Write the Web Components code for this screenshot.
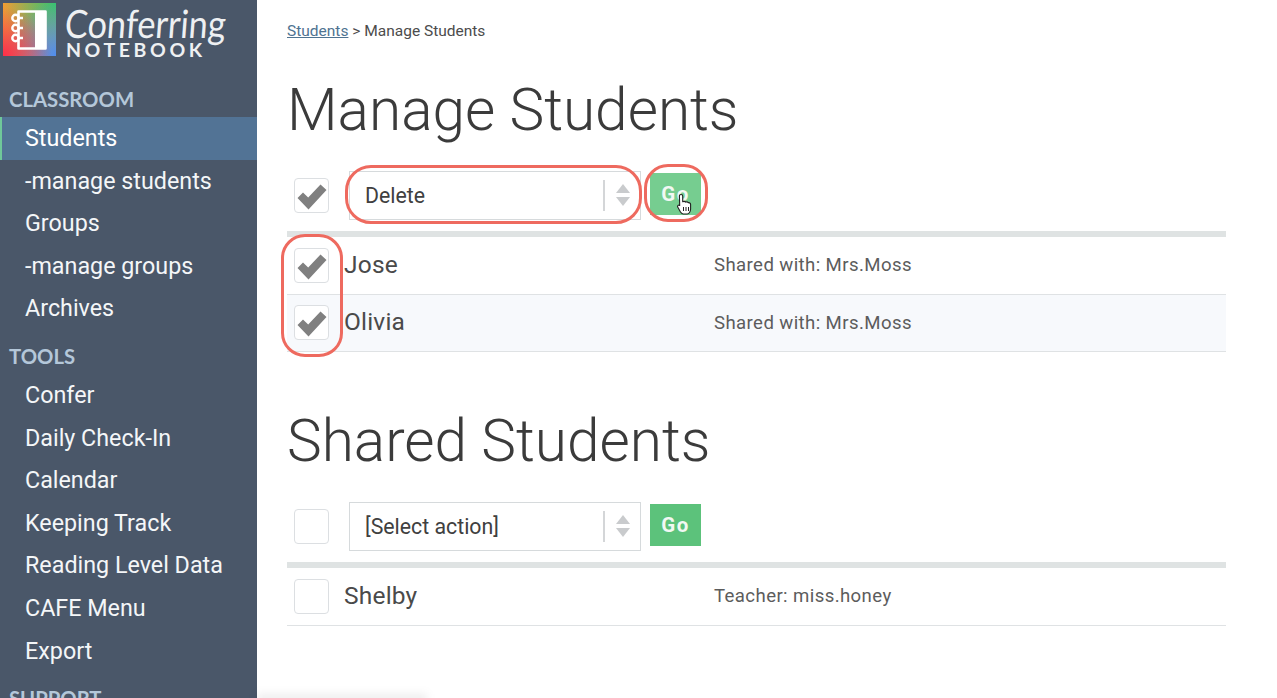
<!DOCTYPE html>
<html lang="en">
<head>
<meta charset="utf-8">
<title>Manage Students</title>
<style>
  html, body { margin: 0; height: 100%; overflow: hidden; background: #fff; }
  body { font-family: Roboto, "Liberation Sans", sans-serif; }
</style>
</head>
<body>
<app-shell>
  <side-nav slot="side">
    <nav-head>CLASSROOM</nav-head>
    <nav-item active>Students</nav-item>
    <nav-item>-manage students</nav-item>
    <nav-item>Groups</nav-item>
    <nav-item>-manage groups</nav-item>
    <nav-item>Archives</nav-item>
    <nav-head>TOOLS</nav-head>
    <nav-item>Confer</nav-item>
    <nav-item>Daily Check-In</nav-item>
    <nav-item>Calendar</nav-item>
    <nav-item>Keeping Track</nav-item>
    <nav-item>Reading Level Data</nav-item>
    <nav-item>CAFE Menu</nav-item>
    <nav-item>Export</nav-item>
    <nav-head>SUPPORT</nav-head>
  </side-nav>

  <bread-crumb><a>Students</a> &gt; Manage Students</bread-crumb>

  <page-title>Manage Students</page-title>
  <action-bar action="Delete" checked marked></action-bar>
  <student-list marked>
    <student-row name="Jose" note="Shared with: Mrs.Moss" checked></student-row>
    <student-row name="Olivia" note="Shared with: Mrs.Moss" checked alt></student-row>
  </student-list>

  <page-title second>Shared Students</page-title>
  <action-bar action="[Select action]"></action-bar>
  <student-list>
    <student-row name="Shelby" note="Teacher: miss.honey"></student-row>
  </student-list>
</app-shell>

<script>
class AppShell extends HTMLElement {
  constructor() {
    super();
    this.attachShadow({ mode: "open" });
    this.shadowRoot.innerHTML = `
      <style>
        :host {
          display: grid;
          grid-template-columns: 257px 1fr;
          height: 698px;
          overflow: hidden;
          position: relative;
        }
        main {
          padding: 0 51px 0 30px;
          min-width: 0;
        }
        .smudge {
          position: absolute;
          left: 257px;
          bottom: -8px;
          width: 170px;
          height: 12px;
          background: rgba(0, 0, 0, 0.07);
          filter: blur(5px);
        }
      </style>
      <slot name="side"></slot>
      <main><slot></slot></main>
      <div class="smudge"></div>
    `;
  }
}

class SideNav extends HTMLElement {
  constructor() {
    super();
    this.attachShadow({ mode: "open" });
    this.shadowRoot.innerHTML = `
      <style>
        :host {
          display: block;
          background: #4a5769;
          height: 698px;
          overflow: hidden;
          color: #fff;
        }
        .logo {
          display: flex;
          gap: 10px;
          height: 86px;
          padding: 3px 0 0 3px;
          box-sizing: border-box;
        }
        .mark {
          width: 53px;
          height: 53px;
          flex: none;
          background:
            radial-gradient(circle at 0% 100%, #ff2d4a 0, rgba(255, 45, 74, 0) 65%),
            radial-gradient(circle at 100% 100%, #4f8df0 0, rgba(79, 141, 240, 0) 72%),
            radial-gradient(circle at 100% 0%, #35c46f 0, rgba(53, 196, 111, 0) 75%),
            linear-gradient(135deg, #ff9a2e, #b9a060);
        }
        .mark svg { display: block; }
        .words {
          position: relative;
          flex: 1;
          color: #eef0f2;
        }
        .hand {
          position: absolute;
          left: 1px;
          top: -3px;
          font: 400 39px/47px Lato, sans-serif;
          transform: scaleX(0.88) skewX(-5deg);
          transform-origin: 0 0;
          white-space: nowrap;
        }
        .book {
          position: absolute;
          left: 0;
          top: 35px;
          font: 700 19.5px/24px Lato, sans-serif;
          letter-spacing: 3.6px;
          white-space: nowrap;
        }
      </style>
      <div class="logo">
        <div class="mark">
          <svg width="53" height="53" viewBox="0 0 53 53" fill="none" stroke="#fff" aria-hidden="true">
            <path d="M15.5 8.5h27v37h-27z" stroke-width="2.6" stroke-linejoin="round"/>
            <path d="M32 8h11v38H32z" fill="#fff" stroke="none"/>
            <g stroke-width="2.4">
              <circle cx="12.5" cy="15" r="3.2"/>
              <circle cx="12.5" cy="25" r="3.2"/>
              <circle cx="12.5" cy="35" r="3.2"/>
              <path d="M15 15h5M15 25h5M15 35h5"/>
            </g>
          </svg>
        </div>
        <div class="words">
          <div class="hand">Conferring</div>
          <div class="book">NOTEBOOK</div>
        </div>
      </div>
      <slot></slot>
    `;
  }
}

class NavHead extends HTMLElement {
  constructor() {
    super();
    this.attachShadow({ mode: "open" });
    this.shadowRoot.innerHTML = `
      <style>
        :host {
          display: block;
          height: 31px;
          padding-left: 9px;
          font: 700 20.3px/27px Lato, sans-serif;
          color: #b4c7d9;
        }
        :host(:not(:first-child)) { margin-top: 13px; }
      </style>
      <slot></slot>
    `;
  }
}

class NavItem extends HTMLElement {
  constructor() {
    super();
    this.attachShadow({ mode: "open" });
    this.shadowRoot.innerHTML = `
      <style>
        :host {
          display: block;
          height: 42.6px;
          line-height: 43px;
          padding-left: 25px;
          font-family: Roboto, sans-serif;
          font-size: 23.3px;
          color: #f4f6f8;
          box-sizing: border-box;
        }
        :host([active]) {
          background: #527395;
          border-left: 2px solid #6fc79a;
          padding-left: 23px;
          color: #fff;
        }
      </style>
      <slot></slot>
    `;
  }
}

class BreadCrumb extends HTMLElement {
  constructor() {
    super();
    this.attachShadow({ mode: "open" });
    this.shadowRoot.innerHTML = `
      <style>
        :host {
          display: block;
          padding-top: 21px;
          font: 15.5px/20px Roboto, sans-serif;
          color: #4c4c4c;
        }
        ::slotted(a) {
          color: #4f7391;
          text-decoration: underline;
        }
      </style>
      <slot></slot>
    `;
  }
}

class PageTitle extends HTMLElement {
  constructor() {
    super();
    this.attachShadow({ mode: "open" });
    this.shadowRoot.innerHTML = `
      <style>
        :host {
          display: block;
          margin-top: 30px;
          height: 88px;
          font: 300 58.5px/78px Roboto, sans-serif;
          color: #3b3b3b;
          white-space: nowrap;
        }
        :host([second]) { margin-top: 50px; }
      </style>
      <slot></slot>
    `;
  }
}

class CheckBox extends HTMLElement {
  constructor() {
    super();
    this.attachShadow({ mode: "open" });
    this.shadowRoot.innerHTML = `
      <style>
        :host {
          display: block;
          flex: none;
          width: 35px;
          height: 35px;
          box-sizing: border-box;
          border: 1px solid #dcdfe2;
          border-radius: 4px;
          background: #fff;
        }
        svg { display: none; width: 33px; height: 33px; }
        :host([checked]) svg { display: block; }
      </style>
      <svg viewBox="0 0 33 33" aria-hidden="true">
        <path d="M2.5 19l5.5-5.5 5.2 5L25.5 5.5l6 5.5L13.5 30.5z" fill="#808080"/>
      </svg>
    `;
  }
}

class ActionBar extends HTMLElement {
  constructor() {
    super();
    this.attachShadow({ mode: "open" });
    const marked = this.hasAttribute("marked");
    const checked = this.hasAttribute("checked") ? "checked" : "";
    this.shadowRoot.innerHTML = `
      <style>
        :host {
          display: flex;
          align-items: center;
          height: 72px;
          padding-left: 7px;
          border-bottom: 6.5px solid #dfe3e3;
        }
        .select {
          position: relative;
          display: flex;
          align-items: center;
          width: 292px;
          height: 49px;
          margin-left: 20px;
          box-sizing: border-box;
          border: 1px solid #d6dadc;
          padding-left: 15px;
          font: 21.3px Roboto, sans-serif;
          color: #404040;
          background: #fff;
        }
        .arrows {
          position: absolute;
          right: 0;
          top: 8px;
          width: 37px;
          height: 31px;
          box-sizing: border-box;
          border-left: 2px solid #d4d6d8;
          display: flex;
          flex-direction: column;
          align-items: center;
          justify-content: center;
          gap: 4px;
        }
        .up, .down {
          width: 0;
          height: 0;
          border-left: 7.5px solid transparent;
          border-right: 7.5px solid transparent;
        }
        .up { border-bottom: 9px solid #c9cbcd; }
        .down { border-top: 9px solid #c9cbcd; }
        .go {
          position: relative;
          width: 51px;
          height: 42px;
          margin: -2px 0 0 9px;
          display: flex;
          align-items: center;
          justify-content: center;
          background: #5cc27b;
          color: #f2f8f3;
          font: 700 20.5px Roboto, sans-serif;
          letter-spacing: 1.5px;
        }
        :host([marked]) .go { background: #76cd90; }
        .ring {
          position: absolute;
          border: 3px solid #ee6a5f;
          border-radius: 26px;
          pointer-events: none;
        }
        .ring-select { left: -5px; right: -2px; top: -7px; bottom: -5px; }
        .ring-go { left: -6px; right: -7px; top: -9px; bottom: -7px; border-radius: 24px; }
        .hand {
          position: absolute;
          left: 26px;
          top: 20px;
        }
      </style>
      <check-box ${checked}></check-box>
      <div class="select">
        ${this.getAttribute("action")}
        <div class="arrows"><div class="up"></div><div class="down"></div></div>
        ${marked ? '<div class="ring ring-select"></div>' : ""}
      </div>
      <div class="go">
        Go
        ${marked ? `
          <div class="ring ring-go"></div>
          <svg class="hand" width="17" height="22" viewBox="0 0 17 22" aria-hidden="true">
            <path d="M5 1.5c1 0 1.7.7 1.7 1.7v5.6c.7-.6 2.3-.6 2.9.3.8-.5 2.2-.3 2.7.6 1-.3 2.3.4 2.3 1.8v4.6c0 2.6-1.7 4.9-3.4 4.9H7.3c-1.2 0-2-.9-2.8-2L1.7 14c-.7-1.2.9-2.6 2-1.5l-.3-9.3C3.4 2.2 4 1.5 5 1.5z" fill="#fff" stroke="#222" stroke-width="1.1" stroke-linejoin="round"/>
            <path d="M7.5 14v4M10 14v4M12.5 14v4" stroke="#222" stroke-width="1"/>
          </svg>` : ""}
      </div>
    `;
  }
}

class StudentList extends HTMLElement {
  constructor() {
    super();
    this.attachShadow({ mode: "open" });
    this.shadowRoot.innerHTML = `
      <style>
        :host {
          display: block;
          position: relative;
        }
        .ring {
          display: none;
          position: absolute;
          left: -6px;
          top: -3px;
          width: 62px;
          height: 123px;
          box-sizing: border-box;
          border: 3px solid #ee6a5f;
          border-radius: 24px;
          pointer-events: none;
        }
        :host([marked]) .ring { display: block; }
      </style>
      <slot></slot>
      <div class="ring"></div>
    `;
  }
}

class StudentRow extends HTMLElement {
  constructor() {
    super();
    this.attachShadow({ mode: "open" });
    const checked = this.hasAttribute("checked") ? "checked" : "";
    this.shadowRoot.innerHTML = `
      <style>
        :host {
          display: flex;
          align-items: center;
          height: 57.5px;
          box-sizing: border-box;
          padding-left: 7px;
          border-bottom: 1px solid #dfe2e4;
          color: #4a4a4a;
        }
        :host([alt]) { background: #f7f9fc; }
        .name {
          width: 370px;
          margin: -2px 0 0 15px;
          font: 24.5px Roboto, sans-serif;
          letter-spacing: 0.2px;
        }
        .note {
          font: 18.6px Roboto, sans-serif;
          letter-spacing: 0.4px;
          color: #5c5c5c;
        }
      </style>
      <check-box ${checked}></check-box>
      <div class="name">${this.getAttribute("name")}</div>
      <div class="note">${this.getAttribute("note")}</div>
    `;
  }
}

customElements.define("app-shell", AppShell);
customElements.define("side-nav", SideNav);
customElements.define("nav-head", NavHead);
customElements.define("nav-item", NavItem);
customElements.define("bread-crumb", BreadCrumb);
customElements.define("page-title", PageTitle);
customElements.define("check-box", CheckBox);
customElements.define("action-bar", ActionBar);
customElements.define("student-list", StudentList);
customElements.define("student-row", StudentRow);
</script>
</body>
</html>
